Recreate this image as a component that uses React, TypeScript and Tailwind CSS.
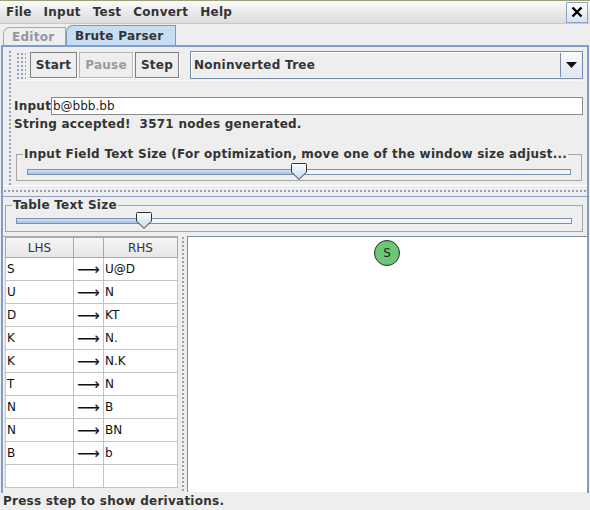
import React from "react"

/* ===== Data ===== */
const menus = ["File", "Input", "Test", "Convert", "Help"]

const productions = [
  { lhs: "S", rhs: "U@D" },
  { lhs: "U", rhs: "N" },
  { lhs: "D", rhs: "KT" },
  { lhs: "K", rhs: "N." },
  { lhs: "K", rhs: "N.K" },
  { lhs: "T", rhs: "N" },
  { lhs: "N", rhs: "B" },
  { lhs: "N", rhs: "BN" },
  { lhs: "B", rhs: "b" },
]

const dots =
  "bg-[radial-gradient(circle,#8fa0bb_0.7px,transparent_1.1px)] bg-[length:4px_4px]"

/* ===== Slider ===== */
function Slider({ fill, thumbLeft }: { fill: number; thumbLeft: number }) {
  return (
    <div className="relative h-[16px]">
      <div className="absolute left-0 right-0 top-[6px] h-[6px] flex border border-[#7b8fb2]">
        <div className="h-full bg-gradient-to-b from-[#d6e3f2] to-[#a8c0de]" style={{ width: fill }} />
        <div className="h-full flex-1 bg-[#f4f4f4]" />
      </div>
      <svg
        className="absolute top-0"
        style={{ left: thumbLeft }}
        width="16"
        height="17"
        viewBox="0 0 16 17"
      >
        <defs>
          <linearGradient id="thumbFill" x1="0" y1="0" x2="0" y2="1">
            <stop offset="0" stopColor="#ffffff" />
            <stop offset="1" stopColor="#c4d7ee" />
          </linearGradient>
        </defs>
        <path
          d="M0.5 1.5 Q0.5 0.5 1.5 0.5 H14.5 Q15.5 0.5 15.5 1.5 V9 L8 16.5 L0.5 9 Z"
          fill="url(#thumbFill)"
          stroke="#333333"
        />
      </svg>
    </div>
  )
}

/* ===== Toolbar button ===== */
function ToolButton({ label, width, disabled }: { label: string; width: string; disabled?: boolean }) {
  return (
    <div
      className={`${width} h-[26px] flex items-center justify-center border bg-[#eeeeee] shadow-[1px_1px_0_0_#ffffff] ${
        disabled ? "border-[#b8b8b8] text-[#9a9a9a]" : "border-[#7f7f7f] text-[#333333]"
      }`}
    >
      {label}
    </div>
  )
}

/* ===== App ===== */
export default function App() {
  return (
    <div className="w-[590px] h-[510px] overflow-hidden flex flex-col bg-[#eeeeee] text-[#333333] text-[12px] tracking-[0.25px] font-bold font-['DejaVu_Sans',sans-serif]">
      {/* Menu bar */}
      <div className="h-[24px] flex items-center border-t border-t-[#9a9f78] border-b border-b-[#c9c9c9] bg-gradient-to-b from-[#fafafa] to-[#dcdcdc]">
        <div className="ml-[6px] flex gap-[12px]">
          {menus.map((m) => (
            <span key={m}>{m}</span>
          ))}
        </div>
        <div className="ml-auto mr-[2px] w-[22px] h-[21px] flex items-center justify-center border border-[#8ea3c4] bg-gradient-to-b from-[#ffffff] to-[#d5e2f1]">
          <svg width="12" height="12" viewBox="0 0 12 12">
            <path d="M1.5 1.5 L10.5 10.5 M10.5 1.5 L1.5 10.5" stroke="#000000" strokeWidth="2.4" />
          </svg>
        </div>
      </div>

      {/* Tabs */}
      <div className="h-[21px] flex items-end">
        <div className="ml-[3px] w-[63px] h-[18px] flex items-center pl-[8px] border border-b-0 border-[#a9a9a9] rounded-tl-[7px] bg-[#eeeeee] text-[#8e98a3]">
          Editor
        </div>
        <div className="w-[110px] h-[20px] flex items-center pl-[8px] border border-b-0 border-[#8096bb] rounded-tl-[7px] bg-[#c8ddf2] text-[#333333]">
          Brute Parser
        </div>
      </div>

      {/* Tab content */}
      <div className="h-[448px] mx-[1px] flex flex-col border-x-2 border-t-2 border-[#7f9ccb]">
        {/* Top pane */}
        <div className="h-[139px] flex border-b border-b-[#ffffff]">
          <div className={`ml-[5px] mt-[3px] w-[4px] h-[136px] ${dots}`} />
          <div className="ml-[2px] flex-1 flex flex-col pr-[4px]">
            {/* Toolbar */}
            <div className="mt-[3px] h-[31px] flex items-center border-b border-b-[#f8f8f8]">
              <div className={`ml-[2px] w-[10px] h-[27px] ${dots}`} />
              <div className="ml-[4px] flex gap-[2px]">
                <ToolButton label="Start" width="w-[47px]" />
                <ToolButton label="Pause" width="w-[54px]" disabled />
                <ToolButton label="Step" width="w-[44px]" />
              </div>
              <div className="ml-[11px] flex-1 h-[28px] flex border border-[#7a8ba6] bg-[#eeeeee] shadow-[inset_1px_1px_0_0_#ffffff]">
                <div className="flex-1 flex items-center pl-[3px]">Noninverted Tree</div>
                <div className="w-[21px] my-[1px] mr-[1px] flex items-center justify-center border-l border-[#7a8ba6] bg-gradient-to-b from-[#fbfbfb] to-[#dde6f0]">
                  <svg width="11" height="6" viewBox="0 0 11 6">
                    <path d="M0 0 H11 L5.5 6 Z" fill="#111111" />
                  </svg>
                </div>
              </div>
            </div>

            {/* Input */}
            <div className="mt-[16px] h-[18px] flex items-center">
              <span className="w-[37px]">Input</span>
              <div className="flex-1 h-[18px] flex items-center pl-[1px] border border-[#8a8a8a] bg-white font-normal tracking-normal text-[#222222]">
                b@bbb.bb
              </div>
            </div>
            <div className="mt-[2px] h-[15px] leading-[15px]">String accepted!&nbsp; 3571 nodes generated.</div>

            {/* Input field text size */}
            <fieldset className="mt-[15px] ml-[2px] mr-[1px] px-[10px] pb-[1px] border border-[#a6a6a6]">
              <legend className="-ml-[4px] px-[1px] leading-[14px] whitespace-nowrap">
                Input Field Text Size (For optimization, move one of the window size adjust...
              </legend>
              <div className="mt-[2px]">
                <Slider fill={272} thumbLeft={264} />
              </div>
            </fieldset>
          </div>
        </div>

        {/* Divider */}
        <div className="h-[11px] flex items-center border-b border-b-[#8ea2bf]">
          <div className={`w-full h-[4px] ${dots}`} />
        </div>

        {/* Bottom pane */}
        <div className="flex-1 flex flex-col pb-[1px]">
          <fieldset className="mt-[1px] ml-[2px] mr-[4px] px-[10px] pb-[3px] border border-[#a6a6a6]">
            <legend className="-ml-[4px] px-[1px] leading-[14px]">Table Text Size</legend>
            <Slider fill={124} thumbLeft={120} />
          </fieldset>

          <div className="mt-[4px] flex-1 flex">
            {/* Grammar table */}
            <div className="w-[175px] pl-[2px] flex flex-col border-t border-[#a9a9a9]">
              <table className="w-[172px] table-fixed border-collapse font-normal tracking-normal text-[#111111] text-[12px]">
                <colgroup>
                  <col className="w-[68px]" />
                  <col className="w-[30px]" />
                  <col className="w-[74px]" />
                </colgroup>
                <thead>
                  <tr className="h-[20px] bg-gradient-to-b from-[#f6f6f6] to-[#e6e6e6] text-[#333333]">
                    <th className="font-normal border border-[#a9a9a9]">LHS</th>
                    <th className="font-normal border border-[#a9a9a9]"></th>
                    <th className="font-normal border border-[#a9a9a9]">RHS</th>
                  </tr>
                </thead>
                <tbody className="bg-white">
                  {[...productions, { lhs: "", rhs: "" }].map((p, i) => (
                    <tr key={i} className="h-[23px]">
                      <td className="pl-[1px] border border-[#c4c4c4]">{p.lhs}</td>
                      <td className="pr-[3px] text-right border border-[#c4c4c4] text-[16px] leading-[15px]">
                        {p.lhs ? "⟶" : ""}
                      </td>
                      <td className="pl-[1px] border border-[#c4c4c4]">{p.rhs}</td>
                    </tr>
                  ))}
                </tbody>
              </table>
            </div>

            {/* Vertical divider */}
            <div className="w-[9px] flex justify-center">
              <div className={`w-[4px] h-full ${dots}`} />
            </div>

            {/* Derivation tree */}
            <div className="relative flex-1 bg-white border-l border-t border-[#7a8a99]">
              <div className="absolute left-[186px] top-[3px] w-[26px] h-[26px] rounded-full bg-[#6cc877] border border-[#2b2b2b] flex items-center justify-center font-normal tracking-normal text-[#222222] text-[12px]">
                S
              </div>
            </div>
          </div>
        </div>
      </div>

      {/* Status bar */}
      <div className="h-[17px] pl-[3px] leading-[17px]">Press step to show derivations.</div>
    </div>
  )
}
